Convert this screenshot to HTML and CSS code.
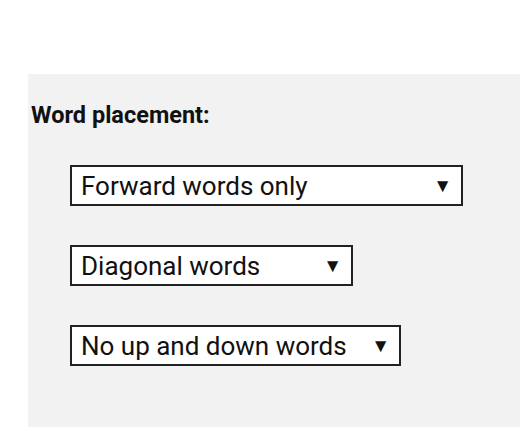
FILE: index.html
```html
<!DOCTYPE html>
<html lang="en">
<head>
    <meta charset="UTF-8">
    <meta name="viewport" content="width=device-width, initial-scale=1.0">
    <title>Word placement</title>
    <link rel="stylesheet" href="styles.css">
</head>
<body>
    <div class="panel">
        <h2 class="panel-title">Word placement:</h2>
        <div class="options">
            <div class="dropdown dropdown-forward">
                <span class="dropdown-label">Forward words only</span>
                <span class="dropdown-arrow">&#9660;</span>
            </div>
            <div class="dropdown dropdown-diagonal">
                <span class="dropdown-label">Diagonal words</span>
                <span class="dropdown-arrow">&#9660;</span>
            </div>
            <div class="dropdown dropdown-updown">
                <span class="dropdown-label">No up and down words</span>
                <span class="dropdown-arrow">&#9660;</span>
            </div>
        </div>
    </div>
</body>
</html>
```

FILE: styles.css
```css
/* Page */
body {
    margin: 0;
    padding: 0;
    background: #ffffff;
    font-family: Roboto, 'Liberation Sans', sans-serif;
    color: #111111;
}

/* Panneau gris */
.panel {
    margin: 74px 0 0 28px;
    height: 353px;
    box-sizing: border-box;
    padding: 26px 0 0 3px;
    background: #f2f2f2;
}

.panel-title {
    margin: 0;
    font-size: 23.5px;
    font-weight: bold;
    line-height: 30px;
}

.options {
    display: flex;
    flex-direction: column;
    align-items: flex-start;
    gap: 39px;
    margin: 35px 0 0 39px;
}

.dropdown {
    display: flex;
    align-items: center;
    justify-content: space-between;
    box-sizing: border-box;
    height: 41px;
    padding: 0 9px 0 9px;
    background: #ffffff;
    border: 2px solid #222222;
    font-size: 26px;
}

.dropdown-forward {
    width: 393px;
}

.dropdown-diagonal {
    width: 283px;
}

.dropdown-updown {
    width: 331px;
}

.dropdown-arrow {
    font-size: 19px;
}
```
